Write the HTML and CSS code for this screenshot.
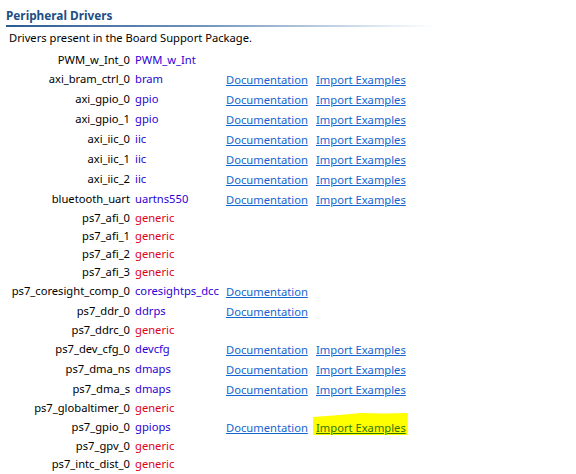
FILE: index.html
```html
<!DOCTYPE html>
<html>
<head>
<meta charset="utf-8">
<link rel="stylesheet" href="styles.css">
</head>
<body>
<section class="section">
  <h2 class="section-title">Peripheral Drivers</h2>
  <p class="section-desc">Drivers present in the Board Support Package.</p>
  <div class="drivers">
    <div class="row"><span class="inst">PWM_w_Int_0</span><span class="drv">PWM_w_Int</span></div>
    <div class="row links"><span class="inst">axi_bram_ctrl_0</span><span class="drv">bram</span><a class="doc" href="#">Documentation</a><a class="imp" href="#">Import Examples</a></div>
    <div class="row links"><span class="inst">axi_gpio_0</span><span class="drv">gpio</span><a class="doc" href="#">Documentation</a><a class="imp" href="#">Import Examples</a></div>
    <div class="row links"><span class="inst">axi_gpio_1</span><span class="drv">gpio</span><a class="doc" href="#">Documentation</a><a class="imp" href="#">Import Examples</a></div>
    <div class="row links"><span class="inst">axi_iic_0</span><span class="drv">iic</span><a class="doc" href="#">Documentation</a><a class="imp" href="#">Import Examples</a></div>
    <div class="row links"><span class="inst">axi_iic_1</span><span class="drv">iic</span><a class="doc" href="#">Documentation</a><a class="imp" href="#">Import Examples</a></div>
    <div class="row links"><span class="inst">axi_iic_2</span><span class="drv">iic</span><a class="doc" href="#">Documentation</a><a class="imp" href="#">Import Examples</a></div>
    <div class="row links"><span class="inst">bluetooth_uart</span><span class="drv">uartns550</span><a class="doc" href="#">Documentation</a><a class="imp" href="#">Import Examples</a></div>
    <div class="row"><span class="inst">ps7_afi_0</span><span class="drv generic">generic</span></div>
    <div class="row"><span class="inst">ps7_afi_1</span><span class="drv generic">generic</span></div>
    <div class="row"><span class="inst">ps7_afi_2</span><span class="drv generic">generic</span></div>
    <div class="row"><span class="inst">ps7_afi_3</span><span class="drv generic">generic</span></div>
    <div class="row links"><span class="inst">ps7_coresight_comp_0</span><span class="drv">coresightps_dcc</span><a class="doc" href="#">Documentation</a></div>
    <div class="row links"><span class="inst">ps7_ddr_0</span><span class="drv">ddrps</span><a class="doc" href="#">Documentation</a></div>
    <div class="row"><span class="inst">ps7_ddrc_0</span><span class="drv generic">generic</span></div>
    <div class="row links"><span class="inst">ps7_dev_cfg_0</span><span class="drv">devcfg</span><a class="doc" href="#">Documentation</a><a class="imp" href="#">Import Examples</a></div>
    <div class="row links"><span class="inst">ps7_dma_ns</span><span class="drv">dmaps</span><a class="doc" href="#">Documentation</a><a class="imp" href="#">Import Examples</a></div>
    <div class="row links"><span class="inst">ps7_dma_s</span><span class="drv">dmaps</span><a class="doc" href="#">Documentation</a><a class="imp" href="#">Import Examples</a></div>
    <div class="row"><span class="inst">ps7_globaltimer_0</span><span class="drv generic">generic</span></div>
    <div class="row links"><span class="inst">ps7_gpio_0</span><span class="drv">gpiops</span><a class="doc" href="#">Documentation</a><a class="imp marked" href="#">Import Examples</a></div>
    <div class="row"><span class="inst">ps7_gpv_0</span><span class="drv generic">generic</span></div>
    <div class="row"><span class="inst">ps7_intc_dist_0</span><span class="drv generic">generic</span></div>
  </div>
</section>
</body>
</html>
```
FILE: styles.css
```css
html, body {
  margin: 0;
  background: #ffffff;
}

body {
  font-family: "Noto Sans", "DejaVu Sans", sans-serif;
  font-size: 11.2px;
  color: #000000;
  overflow: hidden;
}

.section {
  padding: 7px 0 0 6px;
}

.section-title {
  margin: 0;
  font-size: 11.8px;
  font-weight: bold;
  line-height: 16px;
  color: #1e4e84;
  padding-bottom: 2px;
  width: 430px;
  border-bottom: 2px solid transparent;
  border-image: linear-gradient(to right, #2a5a90 0%, #6f93bb 45%, #e6eef6 90%, #ffffff 100%) 1;
}

.section-desc {
  margin: 3px 0 5px 3px;
  line-height: 16px;
}

/* four columns: instance, driver, documentation link, examples link */
.drivers {
  display: grid;
  grid-template-columns: 129px 91px 90px auto;
}

.row {
  display: contents;
}

.row > * {
  height: 18px;
  line-height: 18px;
  white-space: nowrap;
}

/* rows carrying hyperlinks are a little taller */
.row.links > * {
  height: 20px;
  line-height: 19px;
}

.inst {
  grid-column: 1;
  text-align: right;
  padding-right: 5px;
}

.drv {
  grid-column: 2;
  color: #2c00d6;
}

.drv.generic {
  color: #e0001b;
}

.row .doc,
.row .imp {
  color: #1565d0;
  text-decoration: underline;
  line-height: 21px;
  justify-self: start;
}

.row .doc {
  grid-column: 3;
}

.row .imp {
  grid-column: 4;
}

.imp.marked {
  position: relative;
  z-index: 0;
  color: #2f7400;
}

/* yellow marker stroke behind the link */
.imp.marked::before {
  content: "";
  position: absolute;
  left: -3px;
  right: -2px;
  top: -5px;
  bottom: 2px;
  background: #ffff00;
  z-index: -1;
  clip-path: polygon(0 22%, 25% 14%, 50% 4%, 75% 6%, 100% 4%, 100% 100%, 0 100%);
}
```
